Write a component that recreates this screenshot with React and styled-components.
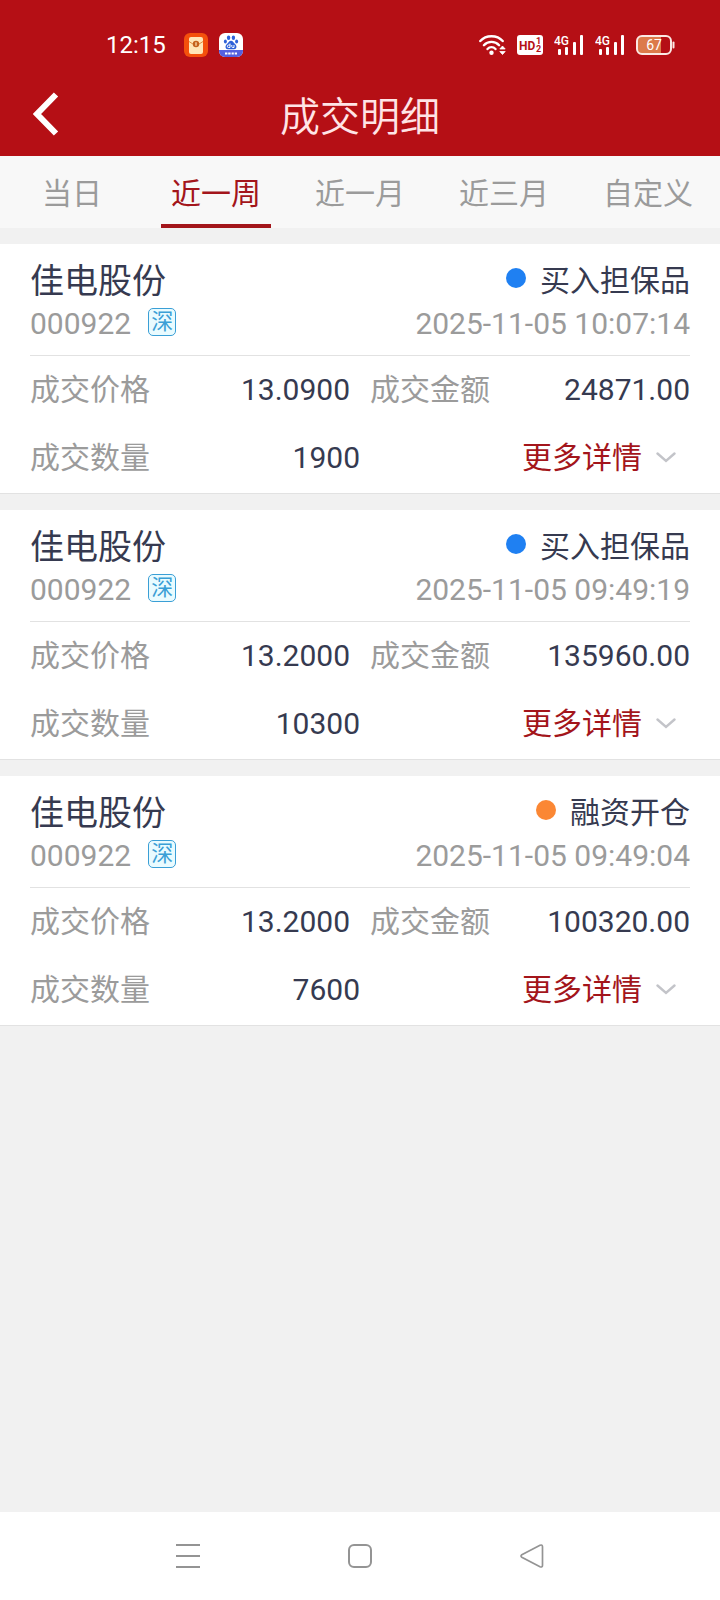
import React, { useState } from 'react';
import styled, { createGlobalStyle } from 'styled-components';

const GlobalStyle = createGlobalStyle`
    *{
        box-sizing: border-box;
    }
    body{
        margin: 0;
        background: #f1f1f1;
        font-family: Roboto, "Noto Sans CJK SC", sans-serif;
    }
    button{
        margin: 0;
        padding: 0;
        border: 0;
        background: none;
        font-family: inherit;
        cursor: pointer;
    }
`;

const tabs = ['当日', '近一周', '近一月', '近三月', '自定义'];

const deals = [
    {
        name: '佳电股份',
        code: '000922',
        type: '买入担保品',
        color: '#1f80f2',
        time: '2025-11-05 10:07:14',
        price: '13.0900',
        amount: '24871.00',
        count: '1900',
    },
    {
        name: '佳电股份',
        code: '000922',
        type: '买入担保品',
        color: '#1f80f2',
        time: '2025-11-05 09:49:19',
        price: '13.2000',
        amount: '135960.00',
        count: '10300',
    },
    {
        name: '佳电股份',
        code: '000922',
        type: '融资开仓',
        color: '#fb8734',
        time: '2025-11-05 09:49:04',
        price: '13.2000',
        amount: '100320.00',
        count: '7600',
    },
];

// Status bar icons
const MailIcon = () => (
    <svg width="24" height="24" viewBox="0 0 24 24">
        <rect width="24" height="24" rx="6" fill="#f4500c" />
        <rect x="5" y="4" width="14" height="17" rx="2" fill="#ffe6b8" />
        <path d="M5 8.5L12 13l7-4.5" fill="none" stroke="#e08a3c" strokeWidth="1" />
        <circle cx="12" cy="11" r="3.2" fill="#c4611c" />
        <path d="M12 9.2v3.6" stroke="#ffe6b8" strokeWidth="1.2" />
    </svg>
);

const PawIcon = () => (
    <svg width="24" height="24" viewBox="0 0 24 24">
        <rect width="24" height="24" rx="6" fill="#fff" />
        <path d="M0 17h24v1a6 6 0 0 1-6 6H6a6 6 0 0 1-6-6z" fill="#5560e0" />
        <g fill="#2f62d8">
            <ellipse cx="9.6" cy="4.8" rx="1.7" ry="2.3" />
            <ellipse cx="14.4" cy="4.8" rx="1.7" ry="2.3" />
            <ellipse cx="6.4" cy="8.4" rx="1.5" ry="2" />
            <ellipse cx="17.6" cy="8.4" rx="1.5" ry="2" />
            <path d="M12 7.8c2 0 2.6 2 4 3.2 2.4 2 1.7 5.2-.8 5.2H8.8c-2.5 0-3.2-3.2-.8-5.2 1.4-1.2 2-3.2 4-3.2z" />
        </g>
        <path d="M11 10.5v4H9.6a1.2 1.2 0 0 1 0-2.5H11M12.8 12v1.7q0 .8.8.8H15V12" fill="none" stroke="#fff" strokeWidth="1" />
        <path d="M6 20.5h2.4M9.2 20.5h2.4M12.6 20.5h2.2M15.7 20.5H18" stroke="#fff" strokeWidth="2" />
    </svg>
);

const WifiIcon = () => (
    <svg width="27" height="20" viewBox="0 0 27 20">
        <g fill="none" stroke="#fff" strokeWidth="2.4" strokeLinecap="round">
            <path d="M1.3 6C7-.4 18-.4 23.7 6" />
            <path d="M4.9 10.2c4-4.5 11.2-4.5 15.2 0" />
            <path d="M8.5 14c2.3-2.5 5.7-2.5 8 0" />
        </g>
        <circle cx="12.5" cy="17.7" r="2.2" fill="#fff" />
        <path d="M20.8 14l2.7-3 2.7 3zM20.8 16.5l2.7 3 2.7-3z" fill="#fff" stroke="#fff" strokeWidth=".8" strokeLinejoin="round" />
    </svg>
);

const HdIcon = () => (
    <svg width="26" height="20" viewBox="0 0 26 20">
        <rect width="26" height="20" rx="3" fill="#fff" />
        <text x="2" y="15" fontSize="12" fontWeight="700" fill="#b50f15">HD</text>
        <text x="19" y="9" fontSize="9" fontWeight="700" fill="#b50f15">1</text>
        <text x="19" y="17" fontSize="9" fontWeight="700" fill="#b50f15">2</text>
    </svg>
);

const SignalIcon = () => (
    <svg width="30" height="28" viewBox="0 -4 30 28">
        <text x="0" y="10" fontSize="12" fontWeight="500" fill="#fff">4G</text>
        <g fill="#fff">
            <rect x="4" y="14" width="3" height="6" rx="1" />
            <rect x="11" y="12" width="3" height="8" rx="1" />
            <rect x="19" y="7" width="3" height="13" rx="1" />
            <rect x="26" y="0" width="3" height="20" rx="1" />
        </g>
    </svg>
);

const BatteryIcon = () => (
    <svg width="39" height="20" viewBox="0 0 39 20">
        <path d="M6 1h19v18H6a5 5 0 0 1-5-5V6a5 5 0 0 1 5-5z" fill="#dc7a4a" />
        <rect x="1" y="1" width="34" height="18" rx="5" fill="none" stroke="#fbe9e4" strokeWidth="2" />
        <path d="M37.5 7.5v5" stroke="#fbe9e4" strokeWidth="2" strokeLinecap="round" />
        <text x="18" y="15" fontSize="14" textAnchor="middle" fill="#fff">67</text>
    </svg>
);

const Deal = ({ deal }) => {
    return(
        <Card>
            <CardHead>
                <HeadLine>
                    <Name>{deal.name}</Name>
                    <Type>
                        <Dot color={deal.color} />
                        {deal.type}
                    </Type>
                </HeadLine>
                <HeadLine>
                    <Code>
                        {deal.code}
                        <Market>深</Market>
                    </Code>
                    <Time>{deal.time}</Time>
                </HeadLine>
            </CardHead>
            <Row $gap="20px">
                <Field>
                    <Label>成交价格</Label>
                    <Value>{deal.price}</Value>
                </Field>
                <Field>
                    <Label>成交金额</Label>
                    <Value>{deal.amount}</Value>
                </Field>
            </Row>
            <Row>
                <Field>
                    <Label>成交数量</Label>
                    <Value>{deal.count}</Value>
                </Field>
                <Field $end>
                    <More type="button">
                        更多详情
                        <svg width="20" height="12" viewBox="0 0 20 12">
                            <path d="M1.5 1.5L10 9l8.5-7.5" fill="none" stroke="#c3c4c9" strokeWidth="2.4" strokeLinecap="round" />
                        </svg>
                    </More>
                </Field>
            </Row>
        </Card>
    );
};

const App = () => {
    const [active, setActive] = useState('近一周');

    return(
        <Page>
            <GlobalStyle />
            <StatusBar>
                <StatusGroup>
                    <Clock>12:15</Clock>
                    <MailIcon />
                    <PawIcon />
                </StatusGroup>
                <StatusGroup>
                    <WifiIcon />
                    <HdIcon />
                    <SignalIcon />
                    <SignalIcon />
                    <BatteryIcon />
                </StatusGroup>
            </StatusBar>
            <Header>
                <Back type="button" aria-label="返回">
                    <svg width="26" height="44" viewBox="0 0 26 44">
                        <path d="M23 2.5L4 22l19 19.5" fill="none" stroke="#fff" strokeWidth="6" />
                    </svg>
                </Back>
                <Title>成交明细</Title>
            </Header>
            <Tabs>
                {tabs.map((tab) => (
                    <Tab key={tab} type="button" $active={tab === active} onClick={() => setActive(tab)}>
                        {tab}
                    </Tab>
                ))}
            </Tabs>
            <List>
                {deals.map((deal) => (
                    <Deal key={deal.time} deal={deal} />
                ))}
            </List>
            <NavBar>
                <button type="button" aria-label="菜单">
                    <svg width="24" height="26" viewBox="0 0 24 26">
                        <path d="M0 2h24M0 13h24M0 24h24" stroke="#949494" strokeWidth="2" />
                    </svg>
                </button>
                <button type="button" aria-label="主页">
                    <svg width="24" height="26" viewBox="0 0 24 26">
                        <rect x="1" y="2" width="22" height="22" rx="5" fill="none" stroke="#949494" strokeWidth="2" />
                    </svg>
                </button>
                <button type="button" aria-label="后退">
                    <svg width="24" height="26" viewBox="0 0 24 26">
                        <path d="M1.8 11.8L20 2.3q2.5-1 2.5 1.5v18.4q0 2.5-2.5 1.5L1.8 14.2q-1.600-1.200 0-2.400z" fill="none" stroke="#949494" strokeWidth="1.7" />
                    </svg>
                </button>
            </NavBar>
        </Page>
    );
};

const Page = styled.div`
    min-height: 100vh;
    display: flex;
    flex-direction: column;
    color: #363a50;
`;

const StatusBar = styled.div`
    height: 76px;
    padding: 14px 45px 0 106px;
    display: flex;
    align-items: center;
    justify-content: space-between;
    background: #b50f15;
    color: #fff;
`;

const StatusGroup = styled.div`
    display: flex;
    align-items: center;
    gap: 11px;
    svg{
        display: block;
    }
`;

const Clock = styled.span`
    margin-right: 7px;
    font-size: 24px;
    line-height: 30px;
`;

const Header = styled.header`
    height: 80px;
    padding: 0 33px;
    display: grid;
    grid-template-columns: 1fr auto 1fr;
    align-items: center;
    background: #b50f15;
`;

const Back = styled.button`
    justify-self: start;
    padding-bottom: 4px;
    svg{
        display: block;
    }
`;

const Title = styled.h1`
    margin: 0;
    padding-top: 4px;
    font-size: 40px;
    line-height: 48px;
    font-weight: 350;
    color: #ffe4e6;
`;

const Tabs = styled.nav`
    height: 72px;
    display: flex;
    justify-content: space-around;
    background: #f8f8f8;
`;

const Tab = styled.button`
    width: 110px;
    padding-top: 7px;
    font-size: 30px;
    line-height: 40px;
    color: ${props => props.$active ? '#a3151b' : '#9b9b9b'};
    border-bottom: 4px solid ${props => props.$active ? '#a3151b' : 'transparent'};
`;

const List = styled.main`
    flex: 1;
    padding: 16px 0;
    display: flex;
    flex-direction: column;
    gap: 16px;
`;

const Card = styled.section`
    padding: 0 30px 1px;
    background: #fff;
    border-bottom: 1px solid #e2e2e2;
`;

const CardHead = styled.div`
    padding: 15px 0 10px;
    border-bottom: 1px solid #e2e2e2;
`;

const HeadLine = styled.div`
    height: 43px;
    display: flex;
    align-items: center;
    justify-content: space-between;
    font-size: 30px;
    line-height: 40px;
`;

const Name = styled.h2`
    margin: 0;
    font-size: 34px;
    line-height: 40px;
    font-weight: 400;
`;

const Type = styled.span`
    display: flex;
    align-items: center;
    gap: 14px;
`;

const Dot = styled.i`
    width: 20px;
    height: 20px;
    margin-bottom: 5px;
    border-radius: 50%;
    background: ${props => props.color};
`;

const Code = styled.span`
    display: flex;
    align-items: center;
    gap: 17px;
    color: #9b9b9b;
`;

const Market = styled.span`
    width: 28px;
    height: 28px;
    margin-bottom: 3px;
    border: 1px solid #3a9fd6;
    border-radius: 5px;
    background: #e9fbff;
    font-size: 22px;
    line-height: 26px;
    text-align: center;
    color: #3a9fd6;
`;

const Time = styled.time`
    color: #9b9b9b;
`;

const Row = styled.div`
    height: 68px;
    display: flex;
    align-items: center;
    gap: ${props => props.$gap || '0'};
    font-size: 30px;
    line-height: 40px;
`;

const Field = styled.div`
    flex: 1;
    display: flex;
    justify-content: ${props => props.$end ? 'flex-end' : 'space-between'};
`;

const Label = styled.span`
    color: #9b9b9b;
`;

const Value = styled.span`
    color: #363a50;
`;

const More = styled.button`
    padding-right: 14px;
    display: flex;
    align-items: center;
    gap: 14px;
    font-size: 30px;
    line-height: 40px;
    color: #a3151b;
`;

const NavBar = styled.footer`
    height: 88px;
    padding: 0 102px;
    display: grid;
    grid-template-columns: repeat(3, 1fr);
    background: #fff;
    button{
        display: flex;
        align-items: center;
        justify-content: center;
    }
`;

export default App;
